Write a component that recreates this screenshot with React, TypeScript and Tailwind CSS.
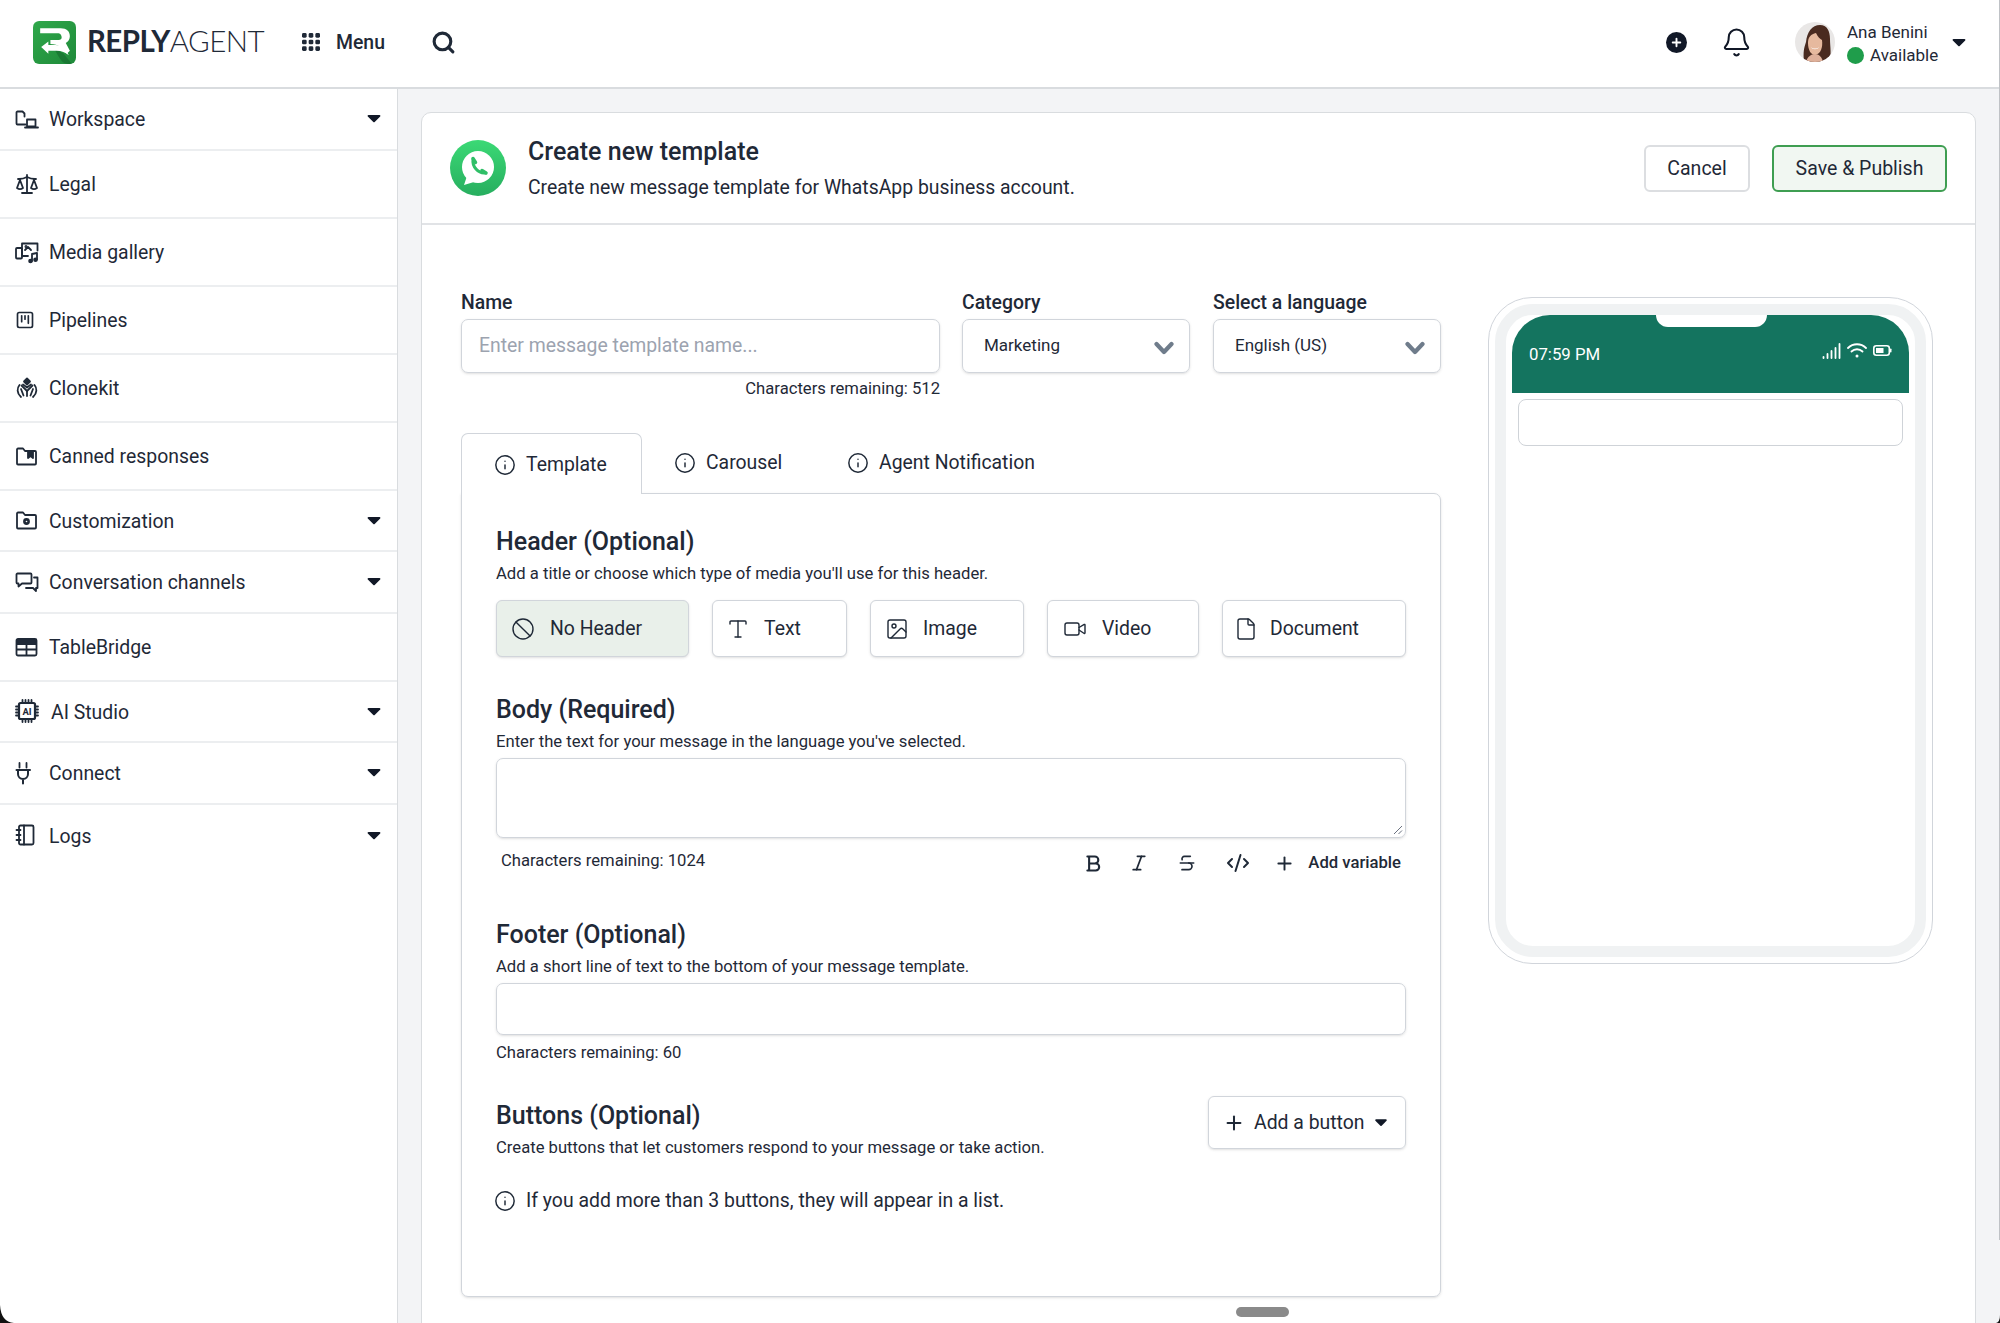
import React from 'react';
import { Ban, Bell, CodeXml, File, Image, Info, Italic, Plus, Scale, Search, SquareKanban, Strikethrough, Type, Video } from 'lucide-react';

function Caret({ className = '' }: { className?: string }) {
  return (
    <svg viewBox="0 0 14 9" className={`w-[14px] h-[9px] shrink-0 ${className}`}>
      <path d="M1.500 1h11c.8 0 1.200.9.7 1.500L7.700 8c-.4.4-1 .4-1.400 0L.8 2.500C.3 1.900.7 1 1.500 1z" fill="#111827" />
    </svg>
  );
}

function Logo() {
  return (
    <svg viewBox="0 0 42 42" className="w-[43px] h-[43px] shrink-0">
      <defs>
        <linearGradient id="lg" x1="0" y1="0" x2="1" y2="1">
          <stop offset="0" stopColor="#2fa84a" />
          <stop offset="1" stopColor="#1f8a3a" />
        </linearGradient>
      </defs>
      <rect width="42" height="42" rx="6" fill="url(#lg)" />
      <path d="M20 26l10 6 8 10h-4c-6 0-8-6-14-16z" fill="#14692d" opacity=".6" />
      <path d="M7 7h20c6 0 9 3 9 8 0 3-1.500 5-4 6.500l4 7.500-3 3-6-6.500c-3-2-6-3-10-3v-4h8c2 0 3-1 3-2.500S27 12 25 12H7z" fill="#fff" />
      <path d="M8 25.500l7-5.500v3.500h7c5 0 10 3 13 10-3.500-3-7-4.500-12-4.500h-8V32z" fill="#fff" />
    </svg>
  );
}

function WhatsappIcon() {
  return (
    <svg viewBox="0 0 56 56" className="w-[56px] h-[56px]">
      <defs>
        <linearGradient id="wa" x1="0" y1="0" x2="0" y2="1">
          <stop offset="0" stopColor="#3bd975" />
          <stop offset="1" stopColor="#27ae5f" />
        </linearGradient>
      </defs>
      <circle cx="28" cy="28" r="28" fill="url(#wa)" />
      <circle cx="28" cy="27" r="16" fill="#fff" />
      <path d="M14 45l3-9 7 6z" fill="#fff" />
      <path d="M23 19.500c-1 7 5 14 12 13.500" fill="none" stroke="#2fbf67" strokeWidth="3" strokeLinecap="round" />
      <path d="M23 18.500l2.500 4M36 33l-4-2.500" fill="none" stroke="#2fbf67" strokeWidth="3.500" strokeLinecap="round" />
    </svg>
  );
}

function Avatar() {
  return (
    <svg viewBox="0 0 40 40" className="w-[40px] h-[40px] rounded-full shrink-0">
      <rect width="40" height="40" fill="#e9e7e6" />
      <path d="M9 40c-1-10 0-14 2-20C12 10 17 3 25 3c7 0 10 6 10 14 0 8 2 16-1 23z" fill="#4a2b20" />
      <path d="M13 21c0-6 3-9 8-10 2 4 4 6 6 7 1 7-1 14-7 15-4 0-7-5-7-12z" fill="#e6b99e" />
      <path d="M16 25c2 2 6 2 8 0-1 3-7 3-8 0z" fill="#fff" />
      <path d="M11 40c1-5 5-8 9-8s7 3 8 8z" fill="#deb09a" />
    </svg>
  );
}

const ic = 'w-[24px] h-[24px] shrink-0';
const st = { fill: 'none', stroke: '#1f2937', strokeWidth: 1.800, strokeLinecap: 'round', strokeLinejoin: 'round' } as const;

function WorkspaceIcon() {
  return (
    <svg viewBox="0 0 24 24" className={ic} {...st}>
      <path d="M10.500 17.500H2.500a1 1 0 0 1-1-1V5.500a1 1 0 0 1 1-1h5l2 2v3" />
      <path d="M12 12.500h8.500v7H12z" />
      <path d="M10 20.500h13" />
    </svg>
  );
}

function GalleryIcon() {
  return (
    <svg viewBox="0 0 24 24" className={ic} {...st}>
      <rect x="1" y="8" width="6" height="10.500" rx="1" />
      <path d="M7 3.500h15.500v7M7 3.500V16h6" />
      <path d="M10 10l3-3 3 3" />
      <circle cx="11" cy="6.500" r=".6" />
      <path d="M17 21v-7l5-1v6.500" />
      <circle cx="15.500" cy="21" r="1.400" fill="#1f2937" />
      <circle cx="20.500" cy="19.700" r="1.400" fill="#1f2937" />
    </svg>
  );
}

function CloneIcon() {
  return (
    <svg viewBox="0 0 24 24" className={ic} {...st}>
      <path d="M12 2.500l3 3-3 3-3-3z" fill="#1f2937" />
      <path d="M4.500 9C2 12 1.500 17 6 21" />
      <path d="M19.500 9C22 12 22.500 17 18 21" />
      <path d="M6.500 9.500l5.500 5.500 5.500-5.500" />
      <path d="M8 8.500l4 3 4-3" />
      <path d="M12 15v5M8.500 19.500L6 13M15.500 19.500L18 13" />
    </svg>
  );
}

function CannedIcon() {
  return (
    <svg viewBox="0 0 24 24" className={ic} {...st}>
      <path d="M2 19.500V5.500a1 1 0 0 1 1-1h5l2 2.500h10a1 1 0 0 1 1 1v11.500a1 1 0 0 1-1 1H3a1 1 0 0 1-1-1z" />
      <path d="M13 7h5v7l-2.500-2-2.500 2z" fill="#1f2937" />
    </svg>
  );
}

function CustomIcon() {
  return (
    <svg viewBox="0 0 24 24" className={ic} {...st}>
      <path d="M2 19.500V5.500a1 1 0 0 1 1-1h5l2 2.500h10a1 1 0 0 1 1 1v11.500a1 1 0 0 1-1 1H3a1 1 0 0 1-1-1z" />
      <circle cx="11.500" cy="13.500" r="2.500" fill="#1f2937" />
      <circle cx="11.500" cy="13.500" r=".8" fill="#fff" stroke="none" />
    </svg>
  );
}

function ChannelsIcon() {
  return (
    <svg viewBox="0 0 24 24" className={ic} {...st}>
      <path d="M2.500 3.500h13a1 1 0 0 1 1 1v8a1 1 0 0 1-1 1H7l-3.500 3v-3h-1a1 1 0 0 1-1-1v-8a1 1 0 0 1 1-1z" />
      <path d="M19 7.500h3.500v10.500H21v3l-3-3h-7" />
    </svg>
  );
}

function TableIcon() {
  return (
    <svg viewBox="0 0 24 24" className={ic}>
      <path d="M3 4h17a1.500 1.500 0 0 1 1.500 1.500V10H1.500V5.500A1.500 1.500 0 0 1 3 4z" fill="#1f2937" />
      <rect x="1.500" y="4" width="20" height="16.500" rx="1.500" fill="none" stroke="#1f2937" strokeWidth="1.800" />
      <path d="M1.500 14.500h20M11.500 9v11" fill="none" stroke="#1f2937" strokeWidth="1.800" />
    </svg>
  );
}

function ChipIcon() {
  return (
    <svg viewBox="0 0 24 24" className={ic} {...st}>
      <rect x="4" y="4" width="16" height="16" rx="1.500" strokeWidth="2.200" />
      <path d="M7.500 1v3M10.500 1v3M13.500 1v3M16.500 1v3M7.500 20v3M10.500 20v3M13.500 20v3M16.500 20v3M1 7.500h3M1 10.500h3M1 13.500h3M1 16.500h3M20 7.500h3M20 10.500h3M20 13.500h3M20 16.500h3" />
      <text x="12" y="15.500" textAnchor="middle" fontSize="9.500" fontWeight="700" fill="#1f2937" stroke="none" fontFamily="Roboto, sans-serif">AI</text>
    </svg>
  );
}

function PlugIcon() {
  return (
    <svg viewBox="0 0 24 24" className={ic} {...st}>
      <path d="M4.500 2v4.500M11.500 2v4.500" />
      <path d="M1.500 9h13.500M3 9v4a5 5 0 0 0 10 0V9M8 18v4.500" strokeWidth="2" />
    </svg>
  );
}

function LogsIcon() {
  return (
    <svg viewBox="0 0 24 24" className={ic} {...st}>
      <rect x="4" y="2.500" width="14.500" height="19" rx="1.500" />
      <path d="M9 2.500v19M1.500 7h4M1.500 12h4M1.500 17h4" />
    </svg>
  );
}

function BoldIcon() {
  return (
    <svg viewBox="0 0 24 24" className="w-[21px] h-[21px]" fill="none" stroke="#1f2937" strokeWidth="2.400" strokeLinejoin="round" strokeLinecap="round">
      <path d="M5 4h8.500a4 4 0 0 1 0 8H7M7 12h7.500a4 4 0 0 1 0 8H5M7 4v16" />
    </svg>
  );
}

const menuItems = [
  { label: 'Workspace', icon: <WorkspaceIcon />, caret: true },
  { label: 'Legal', icon: <Scale size={24} strokeWidth={1.800} color="#1f2937" /> },
  { label: 'Media gallery', icon: <GalleryIcon /> },
  { label: 'Pipelines', icon: <SquareKanban size={20} strokeWidth={2} color="#1f2937" className="mr-[4px]" /> },
  { label: 'Clonekit', icon: <CloneIcon /> },
  { label: 'Canned responses', icon: <CannedIcon /> },
  { label: 'Customization', icon: <CustomIcon />, caret: true },
  { label: 'Conversation channels', icon: <ChannelsIcon />, caret: true },
  { label: 'TableBridge', icon: <TableIcon /> },
  { label: 'AI Studio', icon: <ChipIcon />, caret: true, wide: true },
  { label: 'Connect', icon: <PlugIcon />, caret: true },
  { label: 'Logs', icon: <LogsIcon />, caret: true, last: true },
];

const headerTypes = [
  { label: 'No Header', icon: Ban, box: 'w-[193px] pl-[14px] gap-[15px]', active: true },
  { label: 'Text', icon: Type, box: 'w-[135px] pl-[13px] gap-[14px]' },
  { label: 'Image', icon: Image, box: 'w-[154px] pl-[14px] gap-[14px]' },
  { label: 'Video', icon: Video, box: 'w-[152px] pl-[15px] gap-[15px]' },
  { label: 'Document', icon: File, box: 'w-[184px] pl-[11px] gap-[12px]' },
];

function Sidebar() {
  return (
    <aside className="w-[398px] shrink-0 bg-white border-r border-[#d9dcdf] h-full">
      {menuItems.map((item) => (
        <div
          key={item.label}
          className={`flex items-center pl-[15px] pr-[16px] ${item.caret ? 'h-[61.500px]' : 'h-[68px]'} ${item.last ? '' : 'border-b-2 border-[#eceef0]'}`}
        >
          <span className={`flex items-center ${item.wide ? 'w-[36px]' : 'w-[34px]'}`}>{item.icon}</span>
          <span className="text-[19.400px] leading-[24px] text-[#1f2937] flex-1 pt-[3px]">{item.label}</span>
          {item.caret && <Caret />}
        </div>
      ))}
    </aside>
  );
}

function TopBar() {
  return (
    <header className="h-[89px] shrink-0 bg-white border-b-2 border-[#d9dcdf] flex items-center pl-[33px] pr-[34px] pb-[3px]">
      <Logo />
      <div className="ml-[11px] w-[177px] text-[29.500px] leading-none text-[#1f2937] font-['Lato',sans-serif] tracking-[-0.6px] whitespace-nowrap mb-[2px]">
        <span className="font-bold">REPLY</span><span className="font-light">AGENT</span>
      </div>
      <svg viewBox="0 0 17 17" className="w-[18px] h-[18px] ml-[38px]" fill="#1f2937">
        {[0, 6.300, 12.600].flatMap((x) => [0, 6.300, 12.600].map((y) => <rect key={`${x}-${y}`} x={x} y={y} width="4.400" height="4.400" rx="1.300" />))}
      </svg>
      <span className="ml-[16px] text-[19.400px] font-medium text-[#1f2937] pt-[2px]">Menu</span>
      <Search size={25} strokeWidth={3} color="#1f2937" className="ml-[46px]" />
      <div className="flex-1" />
      <div className="w-[21px] h-[21px] rounded-full bg-[#111827] flex items-center justify-center">
        <Plus size={13} strokeWidth={3.500} color="#fff" />
      </div>
      <Bell size={31} strokeWidth={1.600} color="#111827" className="ml-[34px]" />
      <div className="ml-[43px]"><Avatar /></div>
      <div className="ml-[12px] w-[105px] text-[17px] leading-[23px] text-[#1f2937] mt-[3px]">
        <div>Ana Benini</div>
        <div className="flex items-center gap-[6px]">
          <span className="w-[17px] h-[17px] rounded-full bg-[#1f9d4b]" />
          Available
        </div>
      </div>
      <Caret />
    </header>
  );
}

function ChevronSelect({ value, width }: { value: string; width: string }) {
  return (
    <div className={`${width} h-[54px] border border-[#d1d5db] rounded-[7px] shadow-sm flex items-center justify-between pl-[21px] pr-[15px] text-[17px] text-[#1f2937]`}>
      {value}
      <svg viewBox="0 0 20 14" className="w-[20px] h-[14px] mt-[3px]">
        <path d="M2.500 3l7.500 8 7.500-8" fill="none" stroke="#6f7c8b" strokeWidth="4.200" strokeLinecap="round" strokeLinejoin="round" />
      </svg>
    </div>
  );
}

function Tab({ label, width, active }: { label: string; width: string; active?: boolean }) {
  return (
    <div className={`${width} flex items-center pl-[32px] gap-[10px] text-[19.400px] text-[#1f2937] ${active ? 'h-[61px] border border-b-0 border-[#d1d5db] rounded-t-[7px] bg-white -mb-px relative z-10 pt-[1px]' : 'h-[59px] pb-[1px]'}`}>
      <Info size={22} strokeWidth={1.600} color="#1f2937" />
      {label}
    </div>
  );
}

function Phone() {
  return (
    <div className="w-[445px] h-[667px] shrink-0 rounded-[44px] border border-[#d1d5db] p-[6px] bg-white">
      <div className="h-full rounded-[38px] border-[11px] border-[#f0f2f3] bg-white px-[6px]">
        <div className="relative h-[78px] bg-[#14745f] rounded-t-[38px] flex items-center justify-between pl-[17px] pr-[17px] text-white">
          <div className="absolute left-[144px] top-0 w-[111px] h-[12px] bg-white rounded-b-[12px]" />
          <span className="text-[16.800px] mt-[1px]">07:59 PM</span>
          <div className="flex items-center gap-[6px] mt-[-7px]">
            <svg viewBox="0 0 19 16" className="w-[19px] h-[16px]" fill="none" stroke="#fff" strokeWidth="1.800" strokeLinecap="round">
              <path d="M1.500 15v-1M5.500 15v-4M9.500 15V8M13.500 15V5M17.500 15V1" />
            </svg>
            <svg viewBox="0 0 20 15" className="w-[20px] h-[15px]" fill="none" stroke="#fff" strokeWidth="1.800" strokeLinecap="round">
              <path d="M1 5c5-5 13-5 18 0M4.500 8.500c3-3 8-3 11 0" />
              <circle cx="10" cy="13" r="1.500" fill="#fff" stroke="none" />
            </svg>
            <svg viewBox="0 0 19 11" className="w-[19px] h-[11px]">
              <rect x=".8" y=".8" width="15.500" height="9.400" rx="2.500" fill="none" stroke="#fff" strokeWidth="1.600" />
              <rect x="3" y="3" width="7.500" height="5" fill="#fff" />
              <rect x="17" y="3.500" width="1.500" height="4" rx=".7" fill="#fff" />
            </svg>
          </div>
        </div>
        <div className="mt-[6px] mx-[6px] h-[47px] border border-[#cfd3d8] rounded-[8px]" />
      </div>
    </div>
  );
}

function SectionTitle({ title, sub }: { title: string; sub: string }) {
  return (
    <>
      <h3 className="text-[25px] leading-[30px] font-medium text-[#1f2937]">{title}</h3>
      <p className="text-[16.650px] leading-[20px] mt-[7px] text-[#1f2937]">{sub}</p>
    </>
  );
}

function TemplateBox() {
  return (
    <div className="h-[804px] border border-[#d1d5db] rounded-[7px] rounded-tl-none shadow-sm px-[34px] pt-[33px]">
      <SectionTitle title="Header (Optional)" sub="Add a title or choose which type of media you'll use for this header." />
      <div className="flex gap-[23px] mt-[16px]">
        {headerTypes.map(({ label, icon: Icon, box, active }) => (
          <div key={label} className={`${box} h-[57px] border border-[#d1d5db] rounded-[6px] shadow-sm flex items-center text-[19.400px] text-[#1f2937] ${active ? 'bg-[#e9f0ea]' : 'bg-white'}`}>
            <Icon size={24} strokeWidth={1.400} color="#1f2937" />
            <span className="pt-[1px]">{label}</span>
          </div>
        ))}
      </div>
      <div className="mt-[38px]">
        <SectionTitle title="Body (Required)" sub="Enter the text for your message in the language you've selected." />
      </div>
      <div className="relative mt-[6px] h-[80px] border border-[#d1d5db] rounded-[7px] shadow-sm">
        <svg viewBox="0 0 10 10" className="absolute right-[2px] bottom-[2px] w-[10px] h-[10px]" stroke="#6b7280" strokeWidth="1">
          <path d="M1 9l8-8M5.500 9l3.500-3.500" />
        </svg>
      </div>
      <div className="flex items-center mt-[13px] h-[24px] pl-[5px]">
        <span className="text-[16.650px] text-[#1f2937] mb-[4px]">Characters remaining: 1024</span>
        <div className="flex-1" />
        <BoldIcon />
        <Italic size={20} strokeWidth={2} color="#1f2937" className="ml-[25px]" />
        <Strikethrough size={20} strokeWidth={2} color="#1f2937" className="ml-[28px]" />
        <CodeXml size={24} strokeWidth={2} color="#1f2937" className="ml-[29px]" />
        <Plus size={21} strokeWidth={2.200} color="#1f2937" className="ml-[24px]" />
        <span className="ml-[13px] mr-[5px] text-[16.650px] font-medium text-[#1f2937]">Add variable</span>
      </div>
      <div className="mt-[45px]">
        <SectionTitle title="Footer (Optional)" sub="Add a short line of text to the bottom of your message template." />
      </div>
      <div className="mt-[6px] h-[52px] border border-[#d1d5db] rounded-[7px] shadow-sm" />
      <p className="mt-[8px] text-[16.650px] leading-[20px] text-[#1f2937]">Characters remaining: 60</p>
      <div className="flex justify-between mt-[38px]">
        <div>
          <SectionTitle title="Buttons (Optional)" sub="Create buttons that let customers respond to your message or take action." />
        </div>
        <div className="w-[198px] h-[53px] border border-[#d1d5db] rounded-[6px] shadow-sm flex items-center pl-[14px] text-[19.400px] text-[#1f2937] -mt-[5px]">
          <Plus size={22} strokeWidth={2.200} color="#1f2937" />
          <span className="ml-[9px]">Add a button</span>
          <Caret className="ml-[9px] scale-90" />
        </div>
      </div>
      <div className="flex items-center gap-[10px] mt-[28px] -ml-[2px] text-[19.400px] text-[#1f2937]">
        <Info size={22} strokeWidth={1.600} color="#1f2937" />
        If you add more than 3 buttons, they will appear in a list.
      </div>
    </div>
  );
}

export default function App() {
  return (
    <div className="relative w-[2000px] h-[1323px] overflow-hidden flex flex-col bg-white font-['Roboto',sans-serif]">
      <TopBar />
      <div className="flex flex-1 min-h-0">
        <Sidebar />
        <main className="flex-1 bg-[#f3f4f6] pl-[23px] pr-[24px] pt-[23px] overflow-hidden">
          <div className="bg-white rounded-t-[10px] border border-[#d9dcdf] h-[1300px]">
            <div className="h-[112px] border-b-2 border-[#e1e3e6] flex items-center pl-[28px] pr-[28px]">
              <WhatsappIcon />
              <div className="ml-[22px] flex-1">
                <h1 className="text-[25px] leading-[30px] font-medium text-[#1f2937]">Create new template</h1>
                <p className="text-[19.400px] leading-[24px] mt-[9px] text-[#1f2937]">Create new message template for WhatsApp business account.</p>
              </div>
              <button className="w-[106px] h-[47px] border-2 border-[#dcdee1] rounded-[6px] text-[19.500px] text-[#1f2937] pt-[1px]">Cancel</button>
              <button className="ml-[22px] w-[175px] h-[47px] border-2 border-[#3f9e52] rounded-[6px] bg-[#f1f7f2] text-[19.500px] text-[#1f2937] pt-[1px]">Save &amp; Publish</button>
            </div>
            <div className="flex pl-[39px] pt-[66px]">
              <div className="w-[980px] shrink-0">
                <div className="flex gap-[22px]">
                  <div className="w-[479px]">
                    <label className="block text-[19.400px] leading-[24px] font-medium text-[#1f2937] mb-[4px]">Name</label>
                    <div className="h-[54px] border border-[#d1d5db] rounded-[7px] shadow-sm flex items-center pl-[17px] pb-[1px] text-[19.400px] text-[#9ca3af]">Enter message template name...</div>
                    <p className="text-right text-[16.650px] leading-[22px] mt-[5px] text-[#1f2937]">Characters remaining: 512</p>
                  </div>
                  <div>
                    <label className="block text-[19.400px] leading-[24px] font-medium text-[#1f2937] mb-[4px]">Category</label>
                    <ChevronSelect value="Marketing" width="w-[228px]" />
                  </div>
                  <div className="ml-[1px]">
                    <label className="block text-[19.400px] leading-[24px] font-medium text-[#1f2937] mb-[4px]">Select a language</label>
                    <ChevronSelect value="English (US)" width="w-[228px]" />
                  </div>
                </div>
                <div className="flex items-end mt-[33px]">
                  <Tab label="Template" width="w-[181px]" active />
                  <Tab label="Carousel" width="w-[173px]" />
                  <Tab label="Agent Notification" width="w-[260px]" />
                </div>
                <TemplateBox />
              </div>
              <div className="ml-[47px] mt-[6px]">
                <Phone />
              </div>
            </div>
          </div>
        </main>
      </div>
      <div className="absolute left-[1236px] top-[1307px] w-[53px] h-[10px] rounded-full bg-[#8a8a8a]" />
      <svg viewBox="0 0 14 18" className="absolute left-0 bottom-0 w-[14px] h-[18px]"><path d="M0 0Q1 17 14 18H0z" fill="#111" /></svg>
      <svg viewBox="0 0 4 8" className="absolute right-0 bottom-0 w-[4px] h-[8px]"><path d="M4 0Q4 7 0 8H4z" fill="#111" /></svg>
      <div className="absolute right-0 top-0 w-px h-[1240px] bg-[#bfc2c6]" />
    </div>
  );
}
